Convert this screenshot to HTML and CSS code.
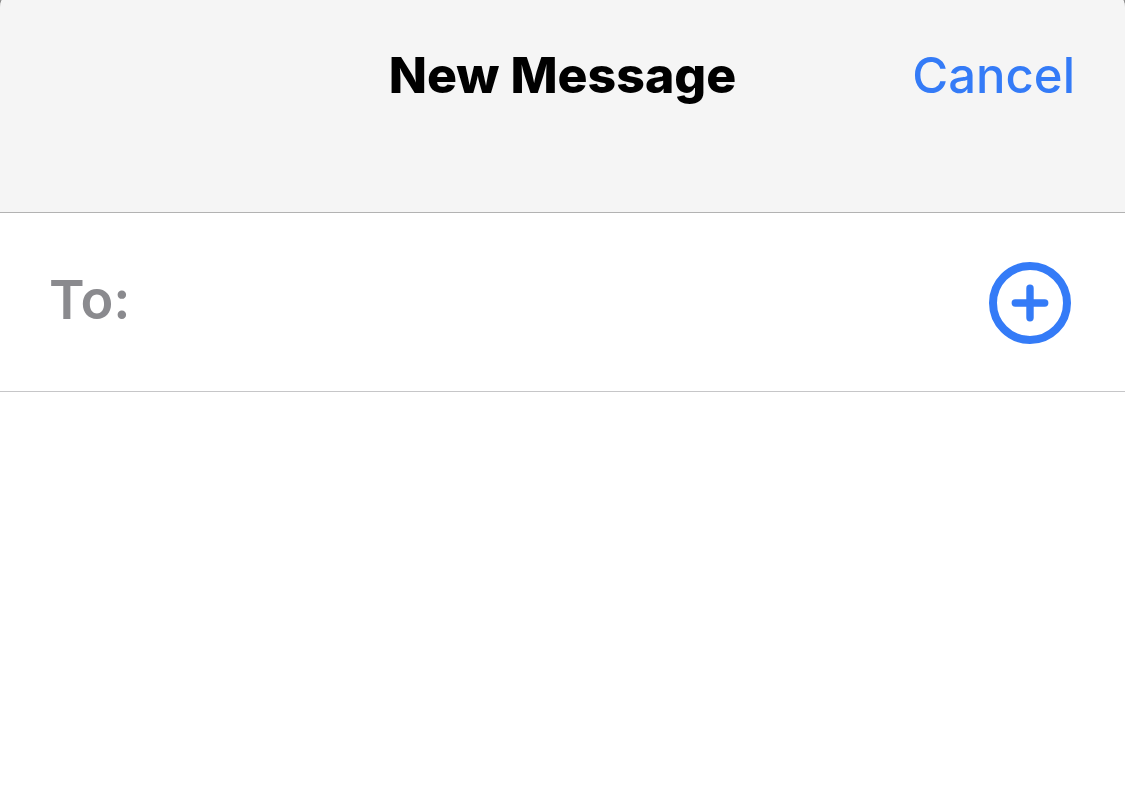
FILE: index.html
```html
<!DOCTYPE html>
<html lang="en">
<head>
<meta charset="utf-8">
<title>New Message</title>
<link rel="stylesheet" href="styles.css">
</head>
<body>
<main class="sheet">
  <header class="header">
    <h1 class="title">New Message</h1>
    <button class="cancel" type="button">Cancel</button>
  </header>
  <form class="recipient">
    <label class="label" for="to">To:</label>
    <input class="field" id="to" type="text" autocomplete="off">
    <button class="add" type="button" aria-label="Add contact">
      <svg class="icon" viewBox="0 0 82 82" fill="none" stroke="currentColor" stroke-linecap="round">
        <circle cx="41" cy="41" r="37" stroke-width="8"/>
        <path d="M26.3 41H55.7M41 26.3V55.7" stroke-width="7.4"/>
      </svg>
    </button>
  </form>
</main>
</body>
</html>
```
FILE: styles.css
```css
* { box-sizing: border-box; }
body { margin: 0; background: #8e8e8e; font-family: Inter, "Liberation Sans", sans-serif; }
button { padding: 0; border: 0; background: none; font: inherit; color: #347bf7; cursor: pointer; }
.sheet { min-height: 100vh; background: #fff; border-radius: 2px 2px 0 0 / 12px 12px 0 0; overflow: hidden; }
.header {
  display: grid;
  grid-template-columns: 1fr auto 1fr;
  align-items: start;
  height: 213px;
  padding: 43px 50px 0;
  background: #f5f5f5;
  border-bottom: 1px solid #b2b2b2;
}
.title { grid-column: 2; margin: 0; font-size: 50px; line-height: 64px; font-weight: 800; color: #000; }
.cancel { justify-self: end; font-size: 49px; line-height: 66px; font-weight: 500; }
.recipient {
  display: flex;
  align-items: flex-start;
  height: 179px;
  padding: 49px 54px 0 49px;
  border-bottom: 1px solid #c6c6c8;
}
.label { font-size: 54px; line-height: 76px; font-weight: 600; color: #8a8a8e; }
.field { flex: 1; min-width: 0; height: 76px; margin: 0 16px; padding: 0; border: 0; outline: 0; background: none; font: inherit; font-size: 54px; }
.add { flex: none; }
.icon { display: block; width: 82px; height: 82px; }
```
